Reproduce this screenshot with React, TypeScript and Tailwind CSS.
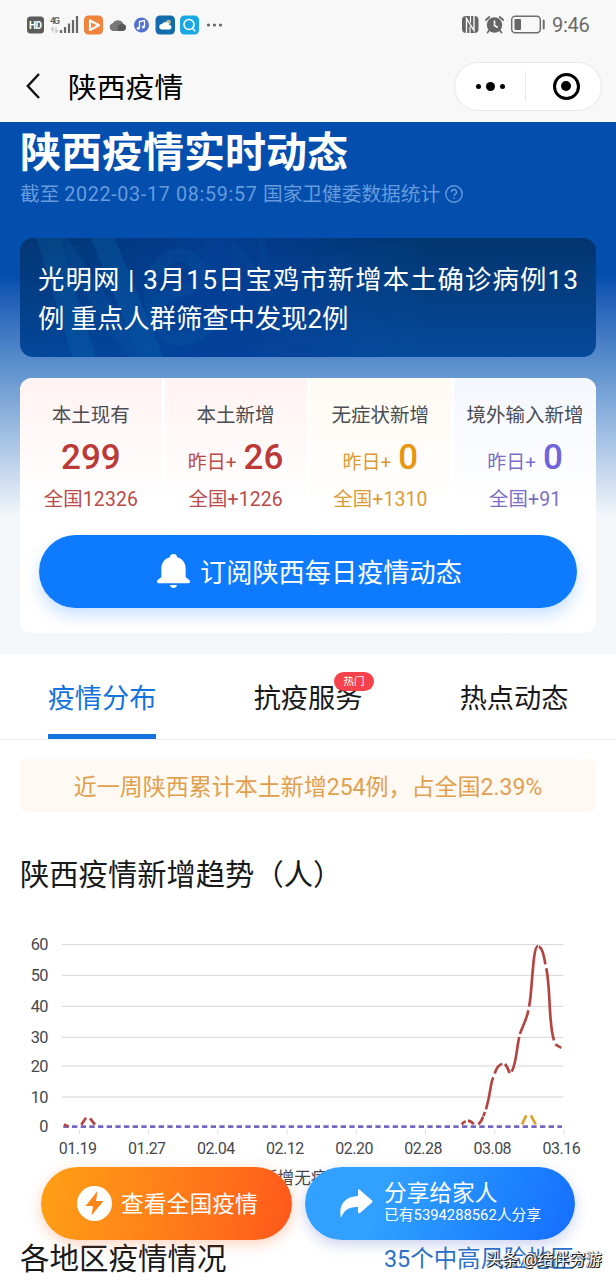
import type { ReactNode } from "react";

const stats = [
	{
		label: "本土现有",
		prefix: "",
		value: "299",
		total: "全国12326",
		bg: "bg-linear-to-b from-[#fff3f2] to-white to-80%",
		value_color: "text-[#bb3a38]",
		text_color: "text-[#ba4a48]",
	},
	{
		label: "本土新增",
		prefix: "昨日+",
		value: "26",
		total: "全国+1226",
		bg: "bg-linear-to-b from-[#fff3f2] to-white to-80%",
		value_color: "text-[#bb3a38]",
		text_color: "text-[#ba4a48]",
	},
	{
		label: "无症状新增",
		prefix: "昨日+",
		value: "0",
		total: "全国+1310",
		bg: "bg-linear-to-b from-[#fffaf2] to-white to-80%",
		value_color: "text-[#e8950f]",
		text_color: "text-[#dc9a35]",
	},
	{
		label: "境外输入新增",
		prefix: "昨日+",
		value: "0",
		total: "全国+91",
		bg: "bg-linear-to-b from-[#f5f7fe] to-white to-80%",
		value_color: "text-[#7064d8]",
		text_color: "text-[#7b6fc4]",
	},
];

const yTicks = [
	{ label: "60", y: 74 },
	{ label: "50", y: 166 },
	{ label: "40", y: 259 },
	{ label: "30", y: 352 },
	{ label: "20", y: 438 },
	{ label: "10", y: 531 },
	{ label: "0", y: 620 },
];

const xTicks = ["01.19", "01.27", "02.04", "02.12", "02.20", "02.28", "03.08", "03.16"];

// Local cases curve, one entry per visible stroke
const localSegments = [
	"M192 613L206 620",
	"M244 614L258 593",
	"M270 595L285 614",
	"M1385 614Q1390 606 1397 604",
	"M1404 602Q1414 603 1421 613",
	"M1435 613Q1444 606 1449 590",
	"M1450 588L1455 576",
	"M1458 568Q1467 535 1471 508T1480 472",
	"M1484 461Q1492 434 1507 432",
	"M1515 432Q1522 440 1529 459",
	"M1535 455Q1544 438 1550 397T1558 351",
	"M1560 342C1567 318 1580 300 1585 271",
	"M1587 260C1597 222 1597 78 1614 78",
	"M1617 79C1627 86 1633 110 1636 133",
	"M1639 145C1653 220 1645 310 1662 361",
	"M1666 373Q1674 380 1684 383",
];

function StatusBar() {
	return (
		<div className="flex h-[50px] items-center justify-between px-[27px] text-[#666]">
			<svg width="198" height="24" viewBox="27 12.5 198 24">
				<rect x="27" y="16" width="17" height="17" rx="3.5" fill="#5c5c5c" />
				<text x="35.5" y="28.5" fontSize="10" fontWeight="700" fill="#fff" textAnchor="middle" textLength="13">HD</text>
				<text x="50" y="23" fontSize="9.5" fontWeight="700" fill="#666" textLength="10">4G</text>
				<path d="M53 32v-5l-2 2M56 27v5l2-2" fill="none" stroke="#c4c4c4" strokeWidth="1.2" />
				<path d="M61 32.5v-3M65 32.5v-6M69 32.5v-9.5M73 32.5v-13M77 32.5v-17" stroke="#666" strokeWidth="2.2" />
				<rect x="84" y="15" width="19" height="19" rx="4.5" fill="#f0843c" />
				<path d="M90 20v9.5l9-4.8z" fill="none" stroke="#fff" strokeWidth="2.2" strokeLinejoin="round" />
				<path d="M91.5 23l4 2-4 2z" fill="#f0843c" />
				<path d="M113 30.5a4 4 0 0 1-.3-7.8 6 6 0 0 1 10.8 1 3.5 3.5 0 0 1-.5 6.8z" fill="#777" />
				<path d="M118 30.5c-2-6 3-8 5.5-6.8a3.5 3.5 0 0 1-.5 6.8z" fill="#595959" />
				<circle cx="141.5" cy="24.5" r="7.5" fill="#5470d0" />
				<path d="M139.5 27.5v-6.5l5-1v6" fill="none" stroke="#fff" strokeWidth="1.3" />
				<circle cx="138.3" cy="27.7" r="1.5" fill="#fff" />
				<circle cx="143.3" cy="26.5" r="1.5" fill="#fff" />
				<rect x="155.5" y="15" width="19.5" height="19" rx="4.5" fill="#136cac" />
				<circle cx="168.5" cy="21.5" r="2.3" fill="#c8ba91" />
				<path d="M162 29a2.7 2.7 0 0 1 0-5.4 4.2 4.2 0 0 1 7.5.6 2.5 2.5 0 0 1 .3 4.8z" fill="#fff" />
				<rect x="180" y="15" width="19" height="19" rx="4.5" fill="#18a9e4" />
				<circle cx="189" cy="24" r="5" fill="none" stroke="#fff" strokeWidth="1.6" />
				<path d="M192.5 28l2.3 2.3" stroke="#fff" strokeWidth="1.6" strokeLinecap="round" />
				<circle cx="208.5" cy="24.5" r="1.6" fill="#666" />
				<circle cx="214.5" cy="24.5" r="1.6" fill="#666" />
				<circle cx="220.5" cy="24.5" r="1.6" fill="#666" />
			</svg>
			<div className="flex items-center gap-[6px]">
				<svg width="84" height="24" viewBox="462 12.5 84 24">
					<rect x="462" y="15.5" width="16.5" height="17" rx="4" fill="#666" />
					<path d="M466.5 32.5V18l7.500 12V15.5" fill="none" stroke="#f8f8f8" strokeWidth="1.4" />
					<path d="M470.5 15.5v6.5M470 26v6.5" stroke="#f8f8f8" strokeWidth="1.2" />
					<circle cx="494.5" cy="24.5" r="7.7" fill="#666" />
					<path d="M485.8 19.5l3.5-3M503.2 19.5l-3.5-3M489.5 29.5l-2 2.5M499.5 29.5l2 2.5" stroke="#666" strokeWidth="1.8" strokeLinecap="round" />
					<path d="M494.5 20v5l3.3 2" fill="none" stroke="#f8f8f8" strokeWidth="1.6" />
					<rect x="511.7" y="15.7" width="28.6" height="16.6" rx="3.5" fill="none" stroke="#6e6e6e" strokeWidth="1.5" />
					<rect x="514.5" y="18.5" width="6.5" height="11" rx="1" fill="#666" />
					<path d="M543.7 20v8" stroke="#6e6e6e" strokeWidth="2" strokeLinecap="round" />
				</svg>
				<span className="w-[37px] whitespace-nowrap text-[20px] leading-6 tracking-[-0.3px] text-[#6a6a6a]">9:46</span>
			</div>
		</div>
	);
}

function NavBar() {
	return (
		<div className="flex h-[72px] items-center pl-[26px] pr-[14px]">
			<svg width="14" height="26" viewBox="0 0 14 26" fill="none" stroke="#111" strokeWidth="2.4">
				<path d="M13 1L1.8 13 13 25" />
			</svg>
			<h1 className="ml-[28px] pt-[3px] text-[28.8px] leading-9 text-black">陕西疫情</h1>
			<div className="ml-auto flex h-[49px] w-[148px] items-center rounded-full border border-[#e7e7e7] bg-white">
				<div className="flex flex-1 items-center justify-center gap-[5px]">
					<i className="size-[5px] rounded-full bg-black" />
					<i className="size-[9px] rounded-full bg-black" />
					<i className="size-[5px] rounded-full bg-black" />
				</div>
				<div className="h-[30px] w-px bg-[#e8e8e8]" />
				<div className="flex flex-1 justify-center pl-[5px]">
					<div className="flex size-[27px] items-center justify-center rounded-full border-[3.5px] border-black">
						<i className="size-[10px] rounded-full bg-black" />
					</div>
				</div>
			</div>
		</div>
	);
}

function NewsCard() {
	return (
		<div className="relative mt-[32px] h-[119px] overflow-hidden rounded-[13px] bg-linear-to-b from-[#03356f] to-[#054a9b] px-[18px] pt-[23px]">
			<div className="absolute inset-y-0 left-0 w-[400px] bg-linear-to-r from-[#04409a]/10 via-[#04409a]/80 to-[#04409a]/0" />
			<svg className="absolute inset-0" width="576" height="119" viewBox="0 0 576 119" fill="none" stroke="#0c72b4" opacity=".24">
				<path d="M26 -6L66 125M80 -6L134 125" strokeWidth="22" />
				<path d="M34 -6L122 125" strokeWidth="16" opacity=".6" />
				<path d="M192 84C155 126 124 82 132 45 143 2 183 14 183 44L134 64" strokeWidth="13" opacity=".6" />
				<path d="M184 20l36 46-5-56 33 38-7-52" strokeWidth="8" opacity=".3" />
				<path d="M300 18L398 0V119H330Z" fill="#0c72b4" stroke="none" opacity=".2" />
			</svg>
			<p className="relative whitespace-nowrap text-[26.4px] leading-[39px] text-white">
				<span className="block tracking-[1.05px]">光明网 | 3月15日宝鸡市新增本土确诊病例13</span>
				<span className="block tracking-[-0.1px]">例 重点人群筛查中发现2例</span>
			</p>
		</div>
	);
}

function StatsCard() {
	return (
		<div className="mt-[21px] h-[255px] overflow-hidden rounded-[12px] bg-white">
			<div className="flex h-[157px] gap-[3px]">
				{stats.map((item) => (
					<div key={item.label} className={`flex flex-1 flex-col items-center whitespace-nowrap pt-[25px] ${item.bg}`}>
						<div className="text-[19.5px] leading-[26px] text-[#4b4d52]">{item.label}</div>
						<div className={`mt-[8px] flex h-[42px] items-baseline gap-[7px] ${item.value_color}`}>
							{item.prefix && <span className={`text-[19px] leading-[42px] ${item.text_color}`}>{item.prefix}</span>}
							<span className="text-[35px] font-medium leading-[42px]">{item.value}</span>
						</div>
						<div className={`mt-[8px] text-[19.4px] leading-[26px] tracking-[0.15px] ${item.text_color}`}>{item.total}</div>
					</div>
				))}
			</div>
			<button className="mx-auto flex h-[73px] w-[538px] items-center justify-center gap-[10px] rounded-full bg-[#0e7bff] pl-[3px] text-[26.2px] text-white shadow-[0_8px_16px_rgba(14,123,255,0.22)]">
				<svg width="33" height="35" viewBox="0 0 34 36" fill="#fff">
					<path d="M17 0a3.8 3.8 0 0 1 3.8 3.2C27 5 29.5 9.5 29.5 15v8.5c0 1.5 4.5 2.5 4.5 5 0 1-.7 1.5-1.7 1.5H1.7C.7 30 0 29.5 0 28.5c0-2.5 4.5-3.5 4.5-5V15C4.5 9.5 7 5 13.2 3.2A3.8 3.8 0 0 1 17 0z" />
					<path d="M13.5 32h7c0 4-7 4-7 0z" />
				</svg>
				<span className="pt-[5px]">订阅陕西每日疫情动态</span>
			</button>
		</div>
	);
}

function Tab({ children, active }: { children: ReactNode; active?: boolean }) {
	return (
		<div
			className={`relative flex h-[85px] w-[108px] justify-center whitespace-nowrap pt-[27px] text-[27.2px] leading-9 ${
				active ? "border-b-[5px] border-[#1673dd] text-[#1673dd]" : "text-[#18191b]"
			}`}
		>
			{children}
		</div>
	);
}

function TrendChart() {
	return (
		<svg className="block" width="616" height="240" viewBox="0 0 1848 720">
			{yTicks.map((tick) => (
				<g key={tick.label}>
					{tick.label !== "0" && <path d={`M185 ${tick.y}H1690`} stroke="#d5d5d5" strokeWidth="3" />}
					<text x="144" y={tick.y + 17} fontSize="49" fill="#46484c" textAnchor="end" letterSpacing="-1.5">
						{tick.label}
					</text>
				</g>
			))}
			{xTicks.map((label, i) => (
				<g key={label}>
					<path d={`M${238 + i * 207.7} 628v15`} stroke="#dedede" strokeWidth="3" />
					<text x={233 + i * 207.3} y="701" fontSize="48" fill="#46484c" textAnchor="middle" letterSpacing="-1.5">
						{label}
					</text>
				</g>
			))}
			<g fill="none" strokeWidth="8">
				<path d="M190 620H1686" stroke="#7667c0" strokeDasharray="16 10" />
				{localSegments.map((d) => (
					<path key={d} d={d} stroke="#b24542" />
				))}
				<path d="M1566 613L1579 586M1593 586L1607 613" stroke="#daa12c" />
			</g>
		</svg>
	);
}

function FloatingActions() {
	return (
		<div className="absolute left-[41px] top-[1167px] flex gap-[13px] text-white">
			<button className="flex h-[73px] w-[251px] items-center rounded-full bg-linear-100 from-[#ffa015] to-[#ff571b] pl-[36px] shadow-[0_4px_14px_rgba(255,105,35,0.3)]">
				<svg width="35" height="35" viewBox="0 0 35 35">
					<circle cx="17.5" cy="17.5" r="17.5" fill="#fff" />
					<path d="M20.5 5L8.5 20h7.5l-1.5 9.5L26.5 15H19z" fill="#ff8519" />
				</svg>
				<span className="ml-[9px] whitespace-nowrap pt-[3px] text-[22.8px]">查看全国疫情</span>
			</button>
			<button className="flex h-[73px] w-[270px] items-center rounded-full bg-linear-110 from-[#31a0ff] from-30% to-[#166dff] pl-[35px] text-left shadow-[0_5px_14px_rgba(60,80,190,0.25)]">
				<svg width="33" height="30" viewBox="0 0 33 30">
					<path d="M18 .5Q19 0 20 1L32 11.5Q33 12.5 32 13.5L20 24Q18 25 18 23V18C9 17.5 4 21 1 29 -2 16 5 7.5 18 7z" fill="#fff" />
				</svg>
				<div className="ml-[11px] -mt-[3px] whitespace-nowrap">
					<div className="text-[22.7px] leading-[26px]">分享给家人</div>
					<div className="text-[14.8px] leading-[17px]">已有5394288562人分享</div>
				</div>
			</button>
		</div>
	);
}

export default function App() {
	return (
		<div className="relative h-[1280px] w-[616px] overflow-hidden bg-white font-[Roboto,'Noto_Sans_CJK_SC',sans-serif]">
			{/* Header */}
			<div className="bg-[#f8f8f8]">
				<StatusBar />
				<NavBar />
			</div>

			{/* Hero */}
			<section className="h-[532px] bg-linear-to-b from-[#044fae] from-[155px] via-[#6294cf] via-[250px] to-[#f4f7fa] to-[395px] px-5">
				<h2 className="whitespace-nowrap pt-[6px] text-[41px] font-bold leading-[50px] text-white">陕西疫情实时动态</h2>
				<div className="mt-[4px] flex items-center gap-[5px] whitespace-nowrap text-[19.7px] leading-[23px] text-[#669bdc]">
					<span className="pt-px">
						截至 <span className="tracking-[0.68px]">2022-03-17 08:59:57 </span>国家卫健委数据统计
					</span>
					<svg width="18" height="18" viewBox="0 0 18 18" fill="none" stroke="currentColor" strokeWidth="1.4">
						<circle cx="9" cy="9" r="8.2" />
						<path d="M6.5 7a2.5 2.5 0 1 1 3.7 2.2Q9 9.8 9 11M9 12.3v1.5" />
					</svg>
				</div>
				<NewsCard />
				<StatsCard />
			</section>

			{/* Tabs */}
			<div className="flex h-[86px] justify-between border-b border-[#ececef] px-[48px]">
				<Tab active>疫情分布</Tab>
				<Tab>
					抗疫服务
					<span className="absolute left-[80px] top-[18px] flex h-[19px] w-[40px] items-center justify-center rounded-full bg-[#f5424b] pt-px text-[10.5px] leading-none text-white">
						热门
					</span>
				</Tab>
				<Tab>热点动态</Tab>
			</div>

			<div className="mx-5 mt-[19px] flex h-[53px] items-center justify-center whitespace-nowrap rounded-[7px] bg-[#fef9f2] pt-[5px] text-[23px] text-[#e0a04e]">
				近一周陕西累计本土新增254例，占全国2.39%
			</div>
			<h3 className="ml-[20px] mt-[43px] text-[29.3px] leading-[40px] text-[#18191b]">陕西疫情新增趋势（人）</h3>
			<div className="mt-[25px]">
				<TrendChart />
			</div>
			<div className="ml-[261px] mt-[8px] text-[16.6px] leading-[22px] text-[#46484c]">新增无症状</div>

			{/* Regions */}
			<div className="mt-[49px] flex items-center justify-between whitespace-nowrap pl-[20px] pr-[30px]">
				<h3 className="text-[29.5px] leading-[40px] text-[#18191b]">各地区疫情情况</h3>
				<div className="flex items-center gap-[3px] text-[23.4px] leading-[32px] text-[#2b72c8]">
					35个中高风险地区
					<svg width="9" height="16" viewBox="0 0 10 18" fill="none" stroke="currentColor" strokeWidth="2">
						<path d="M1 1l8 8-8 8" />
					</svg>
				</div>
			</div>

			<FloatingActions />

			<div className="absolute left-[486px] top-[1249px] whitespace-nowrap text-[16.2px] leading-[22px] text-white [text-shadow:1px_1px_0_#222,1px_0_1px_#222,0_1px_1px_#222]">
				头条 @结伴穷游
			</div>
		</div>
	);
}
